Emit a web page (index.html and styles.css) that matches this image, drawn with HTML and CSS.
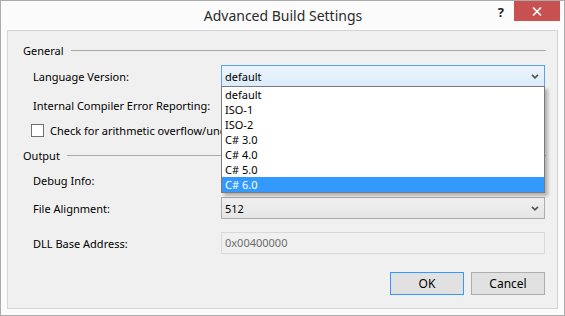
FILE: index.html
```html
<!DOCTYPE html>
<html lang="en">
<head>
  <meta charset="UTF-8" />
  <title>Advanced Build Settings</title>
  <link rel="stylesheet" href="styles.css">
</head>
<body>
  <div class="window">
    <!-- title bar -->
    <div class="titlebar">
      <span></span>
      <span class="title">Advanced Build Settings</span>
      <div class="caption-btns">
        <span class="help">?</span>
        <button class="close-btn">
          <svg width="10" height="9" viewBox="0 0 10 9"><path d="M1 0.5L9 8.5M9 0.5L1 8.5" stroke="#fff" stroke-width="1.6"/></svg>
        </button>
      </div>
    </div>

    <!-- client area -->
    <div class="client">
      <div class="group-head"><span>General</span><div class="rule"></div></div>

      <div class="row row-lang">
        <label>Language Version:</label>
        <div class="combo hot">
          <span>default</span>
          <svg class="chev" width="8" height="5" viewBox="0 0 8 5"><path d="M1 0.8L4 3.8L7 0.8" fill="none" stroke="#555" stroke-width="1.7"/></svg>
          <ul class="dropdown">
            <li>default</li>
            <li>ISO-1</li>
            <li>ISO-2</li>
            <li>C# 3.0</li>
            <li>C# 4.0</li>
            <li>C# 5.0</li>
            <li class="selected">C# 6.0</li>
          </ul>
        </div>
      </div>

      <!-- combos below are covered by the open list -->
      <div class="row row-ice">
        <label>Internal Compiler Error Reporting:</label>
        <div class="combo"><span></span></div>
      </div>

      <div class="check-row">
        <span class="checkbox"></span>
        <span>Check for arithmetic overflow/underflow</span>
      </div>

      <div class="group-head group-output"><span>Output</span><div class="rule"></div></div>

      <div class="row row-debug">
        <label>Debug Info:</label>
        <div class="combo"><span></span></div>
      </div>

      <div class="row row-align">
        <label>File Alignment:</label>
        <div class="combo">
          <span>512</span>
          <svg class="chev" width="8" height="5" viewBox="0 0 8 5"><path d="M1 0.8L4 3.8L7 0.8" fill="none" stroke="#555" stroke-width="1.7"/></svg>
        </div>
      </div>

      <div class="row row-dll">
        <label>DLL Base Address:</label>
        <div class="textbox disabled">0x00400000</div>
      </div>

      <div class="buttons">
        <button class="btn default">OK</button>
        <button class="btn">Cancel</button>
      </div>
    </div>
  </div>
</body>
</html>
```

FILE: styles.css
```css
* {
  box-sizing: border-box;
  margin: 0;
  padding: 0;
}

body {
  font-family: 'Noto Sans', 'Open Sans', sans-serif;
  font-size: 11px;
  color: #000;
  background: #fff;
}

.window {
  width: 565px;
  height: 316px;
  border: 1px solid #ababab;
  background: #fbfbfb;
  display: flex;
  flex-direction: column;
}

.titlebar {
  height: 29px;
  display: grid;
  grid-template-columns: 1fr auto 1fr;
  align-items: start;
}

.title {
  font-size: 14px;
  color: #2b2b2b;
  line-height: 30px;
  padding-left: 1px;
}

.caption-btns {
  justify-self: end;
  display: flex;
  align-items: flex-start;
  margin-right: 4px;
}

.help {
  font-size: 13px;
  font-weight: bold;
  color: #222;
  line-height: 22px;
  margin-right: 10px;
}

.close-btn {
  width: 46px;
  height: 20px;
  background: #c75050;
  border: none;
  display: flex;
  align-items: center;
  justify-content: center;
}

.client {
  flex: 1;
  margin: 0 6px 6px 6px;
  border: 1px solid #d4d4d4;
  background: #f0f0f0;
  display: flex;
  flex-direction: column;
  padding: 11px 12px 0 0;
}

.group-head {
  height: 16px;
  display: flex;
  align-items: center;
  padding-left: 15px;
}

.group-head .rule {
  flex: 1;
  height: 1px;
  background: #a9a9a9;
  margin-left: 7px;
  margin-right: -1px;
}

.row {
  height: 22px;
  display: flex;
  align-items: center;
  padding-left: 25px;
}

.row label {
  flex: 0 0 188px;
  white-space: nowrap;
}

.row-lang { margin-top: 7px; }
.row-ice { margin-top: 7px; }
.row-debug { margin-top: 6px; }
.row-align { margin-top: 6px; }
.row-dll { margin-top: 13px; }
.group-output { margin-top: 8px; }

.combo {
  position: relative;
  flex: 0 0 324px;
  height: 22px;
  border: 1px solid #acacac;
  background: linear-gradient(#f0f0f0, #e5e5e5);
  display: flex;
  align-items: center;
  justify-content: space-between;
  padding: 0 5px 0 3px;
}

.combo.hot {
  border-color: #5ea1e6;
  background: linear-gradient(#ebf4fc, #dcecfc);
}

.dropdown {
  list-style: none;
  position: absolute;
  top: 100%;
  left: -1px;
  right: -1px;
  border: 1px solid #7a7a7a;
  background: #fff;
  box-shadow: 3px 3px 3px rgba(0, 0, 0, 0.25);
  z-index: 5;
}

.dropdown li {
  height: 15px;
  line-height: 15px;
  padding-left: 3px;
}

.dropdown li.selected {
  background: #3399ff;
  color: #fff;
}

.check-row {
  height: 18px;
  margin-top: 5px;
  display: flex;
  align-items: center;
  padding-left: 23px;
  white-space: nowrap;
}

.checkbox {
  flex: 0 0 13px;
  width: 13px;
  height: 13px;
  border: 1px solid #707070;
  background: #fff;
  margin-right: 6px;
}

.textbox {
  flex: 0 0 324px;
  height: 22px;
  border: 1px solid #d9d9d9;
  background: #f0f0f0;
  line-height: 20px;
  padding-left: 3px;
}

.textbox.disabled {
  color: #6d6d6d;
}

.buttons {
  margin-top: 18px;
  display: flex;
  justify-content: flex-end;
  gap: 7px;
}

.btn {
  width: 74px;
  height: 23px;
  font: inherit;
  font-size: 12px;
  color: #000;
  background: #e1e1e1;
  border: 1px solid #adadad;
}

.btn.default {
  border-color: #3399ff;
}
```
